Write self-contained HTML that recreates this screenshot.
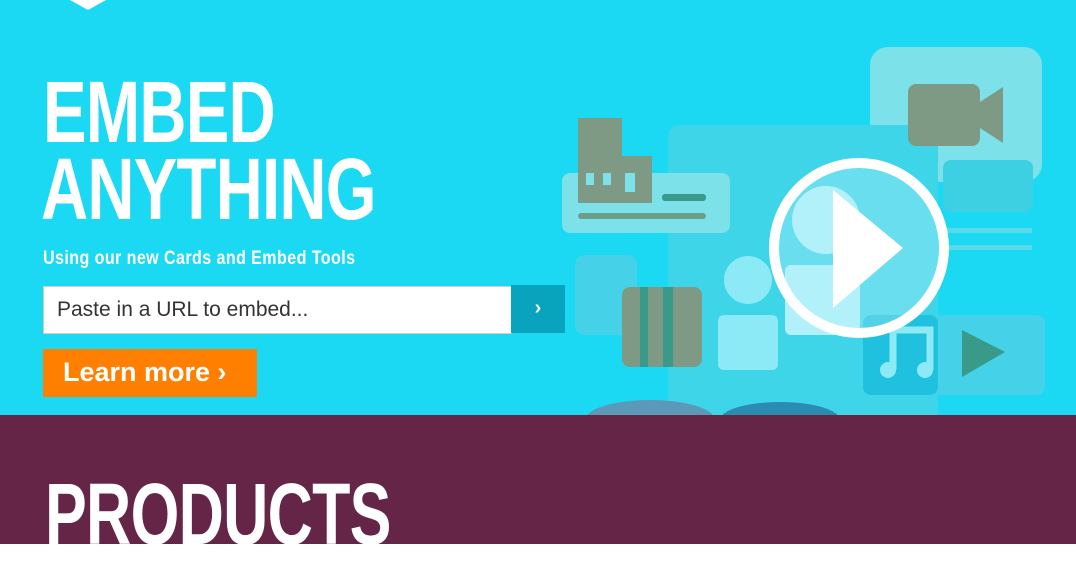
<!DOCTYPE html>
<html><head><meta charset="utf-8"><style>
*{margin:0;padding:0;box-sizing:border-box}
body{width:1076px;height:575px;overflow:hidden;background:#fff;font-family:"Liberation Sans",sans-serif;position:relative}
.hero{position:absolute;left:0;top:0;width:1076px;height:415px;background:#1cd9f3;overflow:hidden}
.big{position:absolute;color:#fff;font-weight:bold;font-size:87px;line-height:87px;transform-origin:0 0;transform:scaleX(0.75);white-space:nowrap;letter-spacing:-1px}
.sub{position:absolute;left:43px;top:248px;color:#fff;font-size:19px;font-weight:bold;transform-origin:0 0;transform:scaleX(0.845);white-space:nowrap;letter-spacing:0.5px}
.inp{position:absolute;left:43px;top:286px;width:469px;height:48px;background:#fff;border:1px solid #ccc;font-size:21px;color:#333;padding:10px 13px;line-height:26px}
.go{position:absolute;left:511px;top:285px;width:54px;height:48px;background:#08a4bd;color:#fff;font-size:20px;font-weight:bold;text-align:center;line-height:46px}
.btn{position:absolute;left:43px;top:349px;width:214px;height:48px;background:#ff7f00;color:#fff;font-size:27px;font-weight:bold;padding-left:20px;line-height:47px}
.prod{position:absolute;left:0;top:415px;width:1076px;height:129px;background:#642547;overflow:hidden}
</style></head><body>
<div class="hero">
<svg style="position:absolute;left:0;top:0" width="1076" height="415">
<path d="M70 0 L88 10 L106 0" fill="#fff"/>
<rect x="870" y="47" width="172" height="135" rx="18" fill="#7de1ea"/>
<rect x="668" y="125" width="270" height="300" rx="12" fill="#3fd5e9"/>
<rect x="562" y="173" width="168" height="60" rx="8" fill="#7de1ea"/>
<rect x="578" y="118" width="44" height="85" fill="#7e9a84"/>
<rect x="620" y="156" width="32" height="47" fill="#7e9a84"/>
<rect x="586" y="173" width="8" height="12" fill="#7de1ea"/><rect x="603" y="173" width="8" height="12" fill="#7de1ea"/><rect x="625" y="173" width="10" height="19" fill="#7de1ea"/>
<rect x="662" y="194" width="44" height="7" rx="3" fill="#3a9a8a"/>
<rect x="578" y="213" width="128" height="6" rx="3" fill="#6a9e88"/>
<rect x="908" y="84" width="72" height="62" rx="8" fill="#7e9a84"/>
<path d="M960 115 L1003 87 L1003 143 Z" fill="#7e9a84"/>
<rect x="943" y="160" width="90" height="52" rx="8" fill="#3dcfe2"/>
<rect x="940" y="228" width="92" height="5" fill="#5ad9e8"/><rect x="940" y="245" width="92" height="5" fill="#5ad9e8"/>
<rect x="575" y="255" width="62" height="80" rx="10" fill="#45d2e8"/>
<rect x="622" y="287" width="80" height="80" rx="8" fill="#7e9a84"/>
<rect x="640" y="287" width="8" height="80" fill="#3a9a8a"/><rect x="663" y="287" width="10" height="80" fill="#3a9a8a"/>
<circle cx="748" cy="280" r="24" fill="#8ceaf7"/>
<rect x="718" y="315" width="60" height="55" rx="6" fill="#8ceaf7"/>
<circle cx="826" cy="220" r="34" fill="#b2f1fb"/>
<rect x="785" y="265" width="75" height="70" rx="6" fill="#b2f1fb"/>
<rect x="863" y="315" width="182" height="80" rx="8" fill="#45d2e8"/>
<rect x="863" y="315" width="75" height="80" rx="8" fill="#20c1de"/>
<path d="M893 330 L930 330 L930 370 M893 330 L893 370" stroke="#8ceaf7" stroke-width="7" fill="none"/>
<circle cx="888" cy="370" r="8" fill="#8ceaf7"/><circle cx="925" cy="370" r="8" fill="#8ceaf7"/>
<path d="M962 330 L1005 352 L962 377 Z" fill="#3a9a8a"/>
<ellipse cx="650" cy="420" rx="65" ry="20" fill="#5a9ab8"/>
<ellipse cx="780" cy="420" rx="60" ry="18" fill="#2a8cb0"/>
<circle cx="859" cy="248" r="85" fill="rgba(180,240,250,0.35)" stroke="#fff" stroke-width="10"/>
<path d="M833 190 L903 248 L833 308 Z" fill="#fff"/>
</svg>
<div class="big" style="left:43px;top:69px">EMBED</div>
<div class="big" style="left:41px;top:146px">ANYTHING</div>
<div class="sub">Using our new Cards and Embed Tools</div>
<div class="inp">Paste in a URL to embed...</div>
<div class="go">›</div>
<div class="btn">Learn more ›</div>
</div>
<div class="prod"><div class="big" style="left:45px;top:56px;transform:scaleX(0.72)">PRODUCTS</div></div>
</body></html>
